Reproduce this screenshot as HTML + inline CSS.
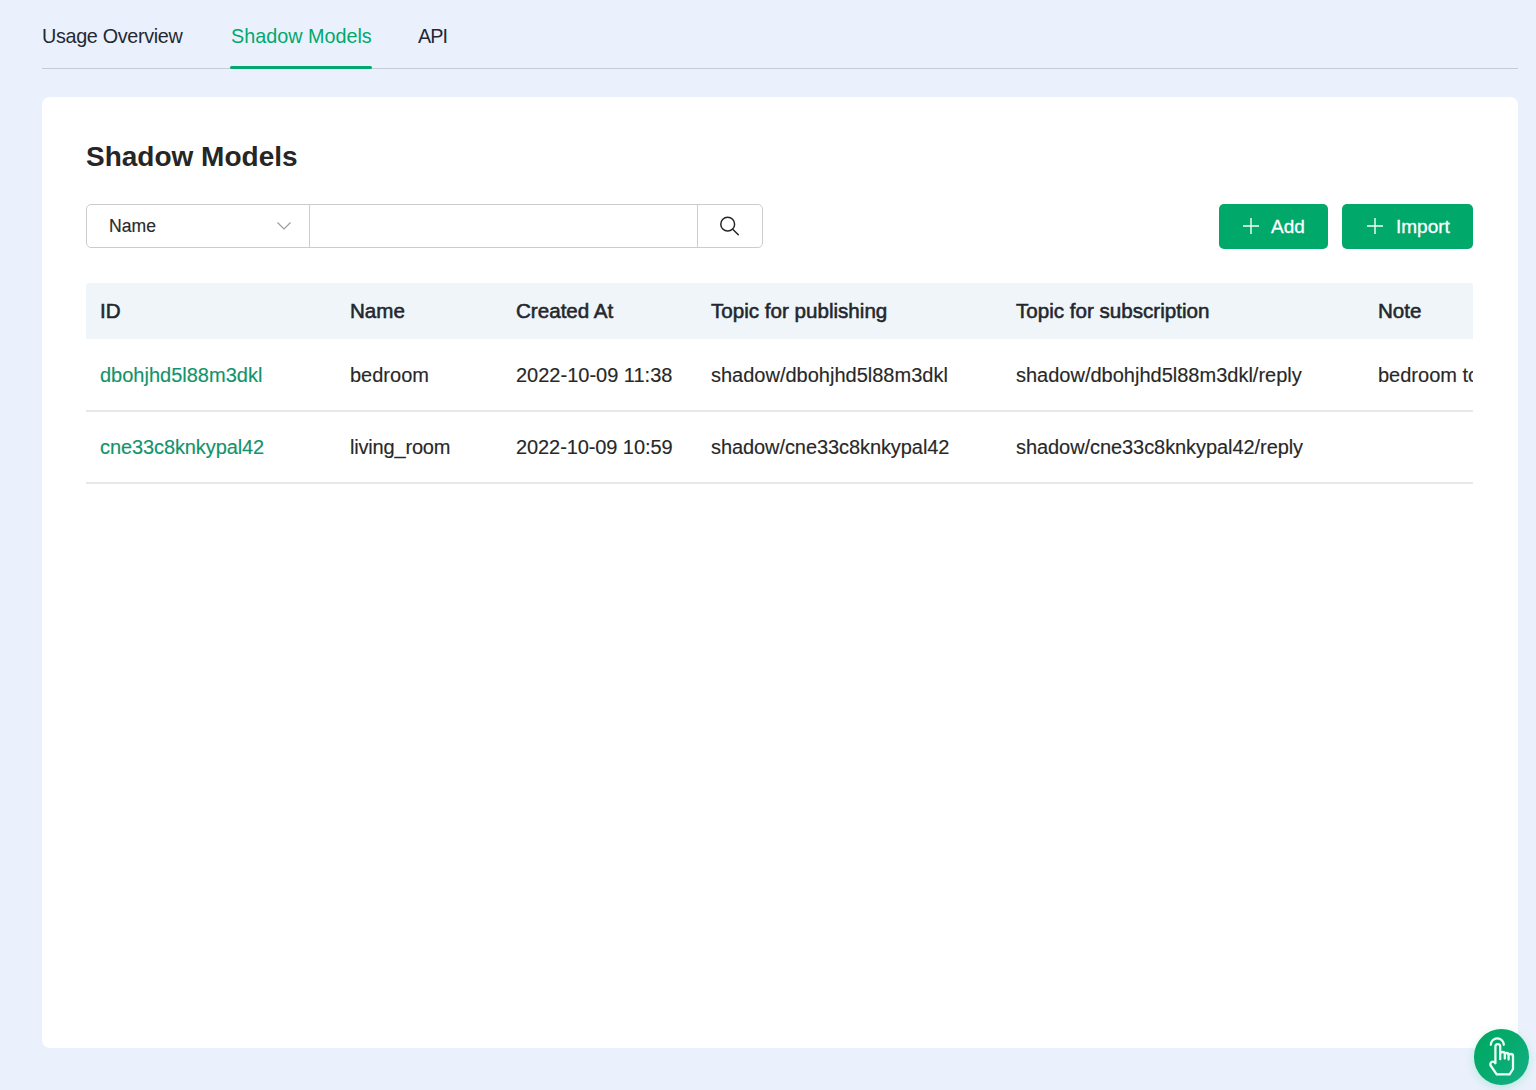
<!DOCTYPE html>
<html>
<head>
<meta charset="utf-8">
<style>
* { box-sizing: border-box; margin: 0; padding: 0; }
html, body { width: 1536px; height: 1090px; overflow: hidden; }
body { background: #ebf1fc; font-family: "Liberation Sans", sans-serif; color: #262a30; position: relative; }
.abs { position: absolute; white-space: nowrap; }
.tabline { position: absolute; left: 42px; top: 68px; width: 1476px; height: 1px; background: #c6ccd6; }
.tab { position: absolute; top: 23.5px; font-size: 19.8px; line-height: 24px; color: #232833; }
.tab.active { color: #00a86e; }
.ink { position: absolute; left: 230px; top: 66px; width: 142px; height: 3px; background: #00a86e; border-radius: 2px; }
.card { position: absolute; left: 42px; top: 97px; width: 1476px; height: 951px; background: #fff; border-radius: 8px; }
.title { position: absolute; left: 86px; top: 141px; font-size: 28px; line-height: 32px; font-weight: 700; color: #262626; }
.search { position: absolute; left: 86px; top: 204px; width: 677px; height: 44px; border: 1px solid #cccccc; border-radius: 5px; }
.sel-text { position: absolute; left: 109px; top: 215px; font-size: 17.6px; line-height: 22px; color: #2a2a2a; -webkit-text-stroke: 0.15px currentColor; }
.div1 { position: absolute; left: 308.5px; top: 204px; width: 1px; height: 44px; background: #cccccc; }
.div2 { position: absolute; left: 697px; top: 204px; width: 1px; height: 44px; background: #cccccc; }
.btn { position: absolute; top: 204px; height: 45px; background: #00a86a; border-radius: 5px; color: #fff; }
.btn span { position: absolute; top: 11.5px; font-size: 19px; line-height: 22px; -webkit-text-stroke: 0.3px currentColor; }
.thead { position: absolute; left: 86px; top: 282.5px; width: 1387px; height: 56.5px; background: #eff5f9; border-radius: 3px 3px 0 0; }
.th { position: absolute; top: 299px; font-size: 20.6px; line-height: 24px; font-weight: 400; color: #23272d; -webkit-text-stroke: 0.55px currentColor; }
.td { position: absolute; font-size: 20px; line-height: 24px; color: #282828; -webkit-text-stroke: 0.15px currentColor; }
.td.g { color: #12936a; }
.rowline { position: absolute; left: 86px; width: 1387px; height: 1.5px; background: #e6e8eb; }
.fab { position: absolute; left: 1473.5px; top: 1029px; width: 55.5px; height: 55.5px; border-radius: 50%; background: linear-gradient(135deg, #00a862 0%, #05aa6c 45%, #17b08a 100%); box-shadow: 0 3px 10px rgba(90,215,175,0.35); }
</style>
</head>
<body>
<div class="tabline"></div>
<div class="abs tab" style="left:42px;letter-spacing:-0.33px">Usage Overview</div>
<div class="abs tab active" style="left:231px;letter-spacing:0px">Shadow Models</div>
<div class="abs tab" style="left:418px;letter-spacing:-0.9px">API</div>
<div class="ink"></div>

<div class="card"></div>
<div class="abs title">Shadow Models</div>

<div class="search"></div>
<div class="div1"></div>
<div class="div2"></div>
<div class="abs sel-text">Name</div>
<svg class="abs" style="left:276px;top:220px" width="16" height="12" viewBox="0 0 16 12"><path d="M1.5 2.5 L8 9 L14.5 2.5" fill="none" stroke="#9a9a9a" stroke-width="1.1"/></svg>
<svg class="abs" style="left:718px;top:214px" width="24" height="24" viewBox="0 0 24 24"><circle cx="9.7" cy="10.2" r="6.9" fill="none" stroke="#262626" stroke-width="1.5"/><path d="M14.7 15.2 L20.3 20.8" stroke="#262626" stroke-width="1.5" stroke-linecap="round"/></svg>

<div class="btn" style="left:1219px;width:109px">
  <svg class="abs" style="left:22.5px;top:13px" width="18" height="18" viewBox="0 0 18 18"><path d="M9 1 V17 M1 9 H17" stroke="#f2fff9" stroke-width="1.4"/></svg>
  <span style="left:52px">Add</span>
</div>
<div class="btn" style="left:1342px;width:131px">
  <svg class="abs" style="left:23.5px;top:13px" width="18" height="18" viewBox="0 0 18 18"><path d="M9 1 V17 M1 9 H17" stroke="#f2fff9" stroke-width="1.4"/></svg>
  <span style="left:54px">Import</span>
</div>

<div class="thead"></div>
<div class="abs th" style="left:100px">ID</div>
<div class="abs th" style="left:350px">Name</div>
<div class="abs th" style="left:516px">Created At</div>
<div class="abs th" style="left:711px">Topic for publishing</div>
<div class="abs th" style="left:1016px">Topic for subscription</div>
<div class="abs th" style="left:1378px">Note</div>

<div class="abs td g" style="left:100px;top:363px">dbohjhd5l88m3dkl</div>
<div class="abs td" style="left:350px;top:363px">bedroom</div>
<div class="abs td" style="left:516px;top:363px">2022-10-09 11:38</div>
<div class="abs td" style="left:711px;top:363px">shadow/dbohjhd5l88m3dkl</div>
<div class="abs td" style="left:1016px;top:363px">shadow/dbohjhd5l88m3dkl/reply</div>
<div class="abs" style="left:1378px;top:363px;width:95px;overflow:hidden"><span class="td" style="position:static">bedroom topic</span></div>
<div class="rowline" style="top:410px"></div>

<div class="abs td g" style="left:100px;top:435px;letter-spacing:-0.1px">cne33c8knkypal42</div>
<div class="abs td" style="left:350px;top:435px;letter-spacing:-0.18px">living_room</div>
<div class="abs td" style="left:516px;top:435px;letter-spacing:-0.09px">2022-10-09 10:59</div>
<div class="abs td" style="left:711px;top:435px;letter-spacing:-0.08px">shadow/cne33c8knkypal42</div>
<div class="abs td" style="left:1016px;top:435px;letter-spacing:-0.07px">shadow/cne33c8knkypal42/reply</div>
<div class="rowline" style="top:482px"></div>

<div class="fab">
  <svg class="abs" style="left:6px;top:1px" width="42" height="52" viewBox="0 0 42 52"><g fill="none" stroke="#eafff6" stroke-width="2.3" stroke-linecap="round" stroke-linejoin="round"><path d="M10.8 14.8 A6.5 6.5 0 0 1 23.8 14.8"/><path d="M15.4 33.2 V16.5 A2.4 2.4 0 0 1 20.2 16.5 V23.5 Q20.2 22 22.5 22 Q24.8 22 24.8 23.5 Q24.8 23 26.7 23 Q28.6 23 28.6 24.5 Q28.6 24 30.8 24 Q33 24 33 26 V39 L29.6 44.4 H16.7 L10.6 35.5 Q9.8 33.5 11.5 32 Q13.5 30.8 15.4 33.2"/><path d="M20.2 23.5 V29.2 M24.8 23.5 V28.6 M28.6 24.5 V29.6"/></g></svg>
</div>
</body>
</html>
